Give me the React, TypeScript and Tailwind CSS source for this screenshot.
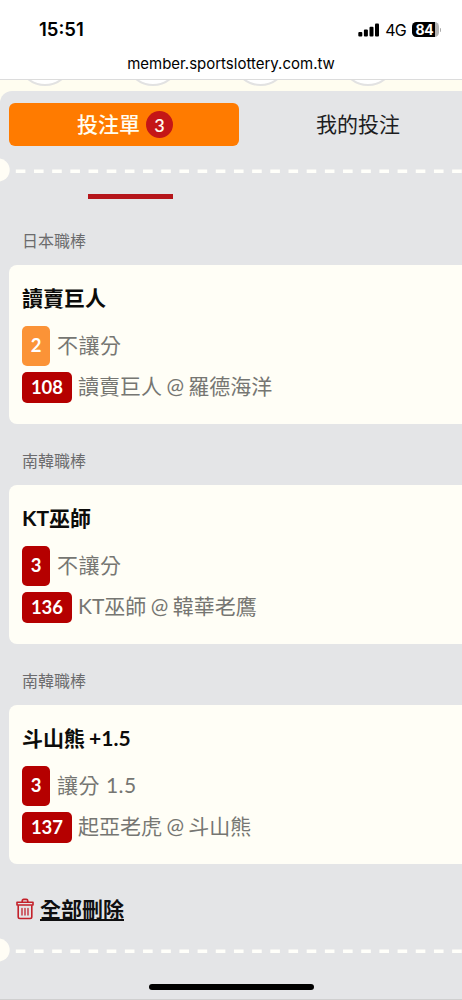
type Bet = {
  league: string
  pick: string
  code: string
  codeClass: string
  market: string
  game: string
  match: string
}

const bets: Bet[] = [
  { league: '日本職棒', pick: '讀賣巨人', code: '2', codeClass: 'bg-[#fb9337]', market: '不讓分', game: '108', match: '讀賣巨人 @ 羅德海洋' },
  { league: '南韓職棒', pick: 'KT巫師', code: '3', codeClass: 'bg-[#b50000]', market: '不讓分', game: '136', match: 'KT巫師 @ 韓華老鷹' },
  { league: '南韓職棒', pick: '斗山熊 +1.5', code: '3', codeClass: 'bg-[#b50000]', market: '讓分 1.5', game: '137', match: '起亞老虎 @ 斗山熊' },
]

function StatusBar() {
  return (
    <div className="h-[80px] shrink-0 bg-white border-b border-[#dcdcdc] font-['Inter',sans-serif] text-black">
      <div className="flex items-center justify-between h-[50px] pt-[9px] pl-[39px] pr-[21px]">
        <span className="text-[18.5px] leading-none font-semibold">15:51</span>
        <div className="flex items-center">
          <svg className="w-[21px] h-[14px]" viewBox="0 0 21 14" fill="currentColor">
            <rect x="0.3" y="9" width="4" height="4.6" rx="1" />
            <rect x="5.9" y="6.6" width="4" height="7" rx="1" />
            <rect x="11.5" y="3.8" width="4" height="9.8" rx="1" />
            <rect x="17" y="0.6" width="4" height="13" rx="1" />
          </svg>
          <span className="ml-1.5 text-[16px] leading-none tracking-[-0.8px]">4G</span>
          <span className="ml-1.5 flex items-center justify-center w-[27px] h-[15px] pr-0.5 rounded-[4.5px] bg-linear-to-r from-black from-84% to-[#b5b5b5] to-84% text-[14px] leading-none font-bold tracking-[-0.4px] text-white">
            84
          </span>
          <span className="ml-px w-px h-1 rounded-r bg-[#aaaaaa]" />
        </div>
      </div>
      <p className="text-center text-[15px] leading-[27px]">member.sportslottery.com.tw</p>
    </div>
  )
}

/* Perforated ticket edge */
function Perforation() {
  return (
    <svg className="block w-full h-6 shrink-0" viewBox="0 0 462 24">
      <circle cx="-2" cy="12" r="11.7" fill="#fffdf5" />
      <line x1="15.8" y1="13.2" x2="462" y2="13.2" stroke="#fffffa" strokeWidth="3.6" strokeDasharray="9.6 8.58" />
    </svg>
  )
}

function BetCard({ bet }: { bet: Bet }) {
  return (
    <section className="h-[220px]">
      <h2 className="h-[47px] pl-[22px] pt-[11px] text-[16px] leading-6 text-[#6b6b6d]">{bet.league}</h2>
      <div className="ml-[9px] h-[159px] pl-[13px] pt-[17px] rounded-l-lg bg-[#fffef6]">
        <h3 className="text-[21px] leading-8 font-bold [word-spacing:-1px] text-[#0c0c0a]">{bet.pick}</h3>
        <div className="flex items-center mt-3 h-10">
          <span className={`flex items-center justify-center w-7 h-10 rounded-[5px] text-[18.5px] font-bold text-white ${bet.codeClass}`}>
            {bet.code}
          </span>
          <span className="ml-[7px] pb-0.5 text-[21px] leading-8 tracking-[0.5px] text-[#767672]">{bet.market}</span>
        </div>
        <div className="flex items-center mt-1.5 h-[31px]">
          <span className="flex items-center justify-center w-[50px] h-[31px] rounded-[5px] bg-[#b50000] text-[18.5px] font-bold text-white">
            {bet.game}
          </span>
          <span className="ml-1.5 pb-1 text-[21px] leading-8 [word-spacing:-1px] text-[#767672]">{bet.match}</span>
        </div>
      </div>
    </section>
  )
}

function TrashIcon() {
  return (
    <svg className="w-[18px] h-[22px]" viewBox="0 0 18 22" fill="none" stroke="#c3212b" strokeWidth="1.6" strokeLinejoin="round">
      <path d="M1 4.3h16v2.7H1z" />
      <path d="M6.2 4.2V3q0-1.6 1.6-1.6h2.4q1.6 0 1.6 1.6v1.2" />
      <path d="M2.2 7.2v11.6q0 1.7 1.7 1.7h10.2q1.7 0 1.7-1.7V7.2" />
      <path d="M6 10.5v6.5M9 10.5v6.5M12 10.5v6.5" strokeWidth="1.3" strokeLinecap="round" />
    </svg>
  )
}

export default function App() {
  return (
    <div className="flex flex-col w-[462px] h-[1000px] overflow-hidden bg-[#fffdf0] font-['Lato','Noto_Sans_CJK_TC',sans-serif]">
      <StatusBar />

      <svg className="block w-full h-[11px] shrink-0" viewBox="0 0 462 11" fill="#fff" stroke="#e2e2e2" strokeWidth="2">
        {[45, 153, 260.5, 368].map((cx) => (
          <circle key={cx} cx={cx} cy="-22" r="27" />
        ))}
      </svg>

      <main className="flex flex-col flex-1 rounded-tl-xl bg-[#e4e5e7] border-b border-[#cfcfcf]">
        <div className="flex items-center pt-3 pl-[9px]">
          <button className="flex items-center justify-center gap-1.5 w-[230px] h-[43px] pl-0.5 shrink-0 rounded-md bg-[#ff7b00] text-[21px] font-medium text-[#fffdf0]">
            <span className="pb-0.5">投注單</span>
            <span className="flex items-center justify-center w-[27px] h-[27px] rounded-full bg-[#c41617] text-[18px] leading-none font-semibold">3</span>
          </button>
          <button className="w-[238px] h-[43px] pb-0.5 shrink-0 text-[21px] text-[#1d1d1f]">我的投注</button>
        </div>

        <div className="mt-3">
          <Perforation />
        </div>
        <div className="ml-[88px] mt-[12px] w-[85px] h-[5px] shrink-0 bg-[#b5151b]" />

        <div className="mt-[19px]">
          {bets.map((bet) => (
            <BetCard key={bet.game} bet={bet} />
          ))}
        </div>

        <div className="flex items-center h-8 mt-[15px] pl-4 gap-1.5">
          <TrashIcon />
          <a href="#" className="text-[21px] leading-8 font-bold text-[#0f0f10] underline decoration-2 underline-offset-2">
            全部刪除
          </a>
        </div>

        <div className="mt-[13px]">
          <Perforation />
        </div>
        <div className="ml-[149px] mt-[22px] w-[165px] h-1.5 rounded-full bg-black" />
      </main>
    </div>
  )
}
